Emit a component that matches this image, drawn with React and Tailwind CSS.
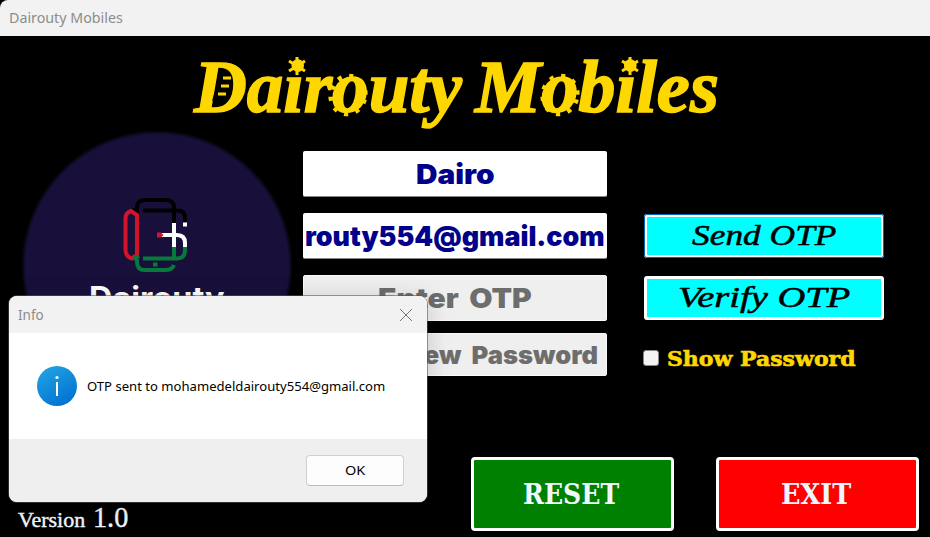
import { useLayoutEffect, useRef, useState } from "react";

// Text stretched horizontally so that it fills a given width.
function FitText({ width, className = "", children }) {
  const ref = useRef(null);
  const [scale, setScale] = useState(1);
  useLayoutEffect(() => {
    setScale(width / ref.current.offsetWidth);
  }, [width]);
  return (
    <span className="inline-block shrink-0" style={{ width }}>
      <span
        ref={ref}
        className={`inline-block origin-left whitespace-nowrap ${className}`}
        style={{ transform: `scaleX(${scale})` }}
      >
        {children}
      </span>
    </span>
  );
}

function PhoneLogo() {
  return (
    <svg width="270" height="270" viewBox="22 131 270 270" fill="none" strokeWidth="4">
      <defs>
        <radialGradient id="disc">
          <stop offset="0.965" stopColor="#18103a" />
          <stop offset="1" stopColor="#000000" />
        </radialGradient>
      </defs>
      <circle cx="157" cy="266" r="136" fill="url(#disc)" />
      <path d="M137 214V208Q137 200 145 200H166Q174 200 174 208V223M143 210.5H178Q185 210.5 185 218V222M132 209L138 215" stroke="#000" />
      <path d="M137 215V255L131.5 258.5Q125.500 256 125.500 250V218Q125.500 213 131 211Z" stroke="#cf142b" />
      <path d="M174 223V247M161 235H177Q185 235 185 243V247M183 224.500H187" stroke="#fff" />
      <path d="M157 232.500H161L163.500 235L161 237.500H157Z" fill="#cf142b" />
      <path d="M174 247V257M185 247V250Q185 258.500 177 258.500H143M137 256V262Q137 270 145 270H166Q172 270 174 265M133 259L139 256M153 264.500H157.500" stroke="#07793b" />
    </svg>
  );
}

// Gear teeth and star points laid over the title lettering.
function TitleOrnaments() {
  return (
    <svg className="absolute left-0 top-0" width="930" height="95" viewBox="0 36 930 95" fill="none" stroke="#ffd700">
      <g strokeWidth="5" strokeDasharray="4 7.500">
        <ellipse cx="348" cy="95" rx="17" ry="19" transform="rotate(15 348 95)" />
        <ellipse cx="560" cy="95" rx="17" ry="19" transform="rotate(15 560 95)" />
      </g>
      <g strokeWidth="3">
        <path d="M297 57V75M289 61L305 71M305 61L289 71" />
        <path d="M630 57V75M622 61L638 71M638 61L622 71" />
      </g>
      <path d="M223 72L214 101" stroke="#000" strokeWidth="4" />
      <path d="M223 78H231M221 86H229M218 94H226" strokeWidth="3" />
    </svg>
  );
}

const field =
  "flex w-[304px] items-center justify-center overflow-hidden rounded-[2px] border-b border-[#868686] bg-white pt-0.5 font-['Inter'] text-[27.5px] font-black leading-none text-[#00008b]";
const disabled =
  "flex w-[304px] items-center overflow-hidden rounded-[2px] border border-[#fafafa] bg-[#efefef] pt-0.5 font-['Inter'] font-black leading-none text-[#6d6d6d]";
const cyan =
  "flex w-60 items-center justify-center rounded-[3px] border-[3px] bg-[#00ffff] pb-0.5 font-['Liberation_Serif'] text-[30px] italic leading-none text-black [-webkit-text-stroke:0.5px_black]";
const action =
  "flex h-[74px] w-[203px] items-center justify-center rounded-[4px] border-[3px] border-white pr-[3px] font-['DejaVu_Serif'] text-[27px] font-bold leading-none text-[#f0f8ff]";

export default function App() {
  return (
    <div className="relative flex h-[537px] w-[930px] flex-col overflow-hidden bg-black">
      <header className="flex h-9 shrink-0 items-center rounded-tl-lg bg-[#f2f2f2] pl-[9px] font-['Noto_Sans'] text-[14.5px] text-[#8c8c8c]">
        <FitText width={114}>Dairouty Mobiles</FitText>
      </header>

      <h1 className="relative flex h-[95px] shrink-0 pl-[194px] pt-[9px] font-['Liberation_Serif'] text-[75px] font-bold italic leading-[84px] text-[#ffd700]">
        <FitText width={268} className="[-webkit-text-stroke:1.5px_#ffd700]">Dairouty</FitText>
        <span className="w-[13px]" />
        <FitText width={244} className="[-webkit-text-stroke:1.5px_#ffd700]">Mobiles</FitText>
        <TitleOrnaments />
      </h1>

      <main className="flex h-[270px] shrink-0 pl-[22px]">
        <div className="relative h-[270px] w-[270px]">
          <PhoneLogo />
          <div className="absolute left-[67px] top-[144px] font-['Inter'] text-[31px] font-bold text-white">
            <FitText width={136}>Dairouty</FitText>
          </div>
        </div>

        <div className="ml-[11px] flex flex-col pt-5">
          <div className={`${field} h-[46px]`}>
            <FitText width={79}>Dairo</FitText>
          </div>
          <div className={`${field} mt-4 h-[46px]`}>
            <FitText width={300}>routy554@gmail.com</FitText>
          </div>
          <div className={`${disabled} mt-4 h-[46px] pl-[74px] text-[27.5px]`}>
            <FitText width={154} className="[word-spacing:4px]">Enter OTP</FitText>
          </div>
          <div className={`${disabled} mt-3 h-[43px] pl-[21px] text-[25px]`}>
            <FitText width={273} className="[word-spacing:5px]">Enter New Password</FitText>
          </div>
        </div>

        <div className="ml-[37px] flex flex-col pt-[83px]">
          <div className={`${cyan} h-11 border-white outline outline-1 -outline-offset-1 outline-[#0067c0]`}>
            <FitText width={145}>Send OTP</FitText>
          </div>
          <div className={`${cyan} mt-[18px] h-11 border-white`}>
            <FitText width={172}>Verify OTP</FitText>
          </div>
          <div className="mt-[25px] flex h-[26px] items-center font-['DejaVu_Serif'] text-[20px] font-bold leading-none text-[#ffd700]">
            <span className="-ml-px mr-2 h-4 w-4 rounded-[3px] border border-[#868686] bg-[#f3f3f3]" />
            <FitText width={189} className="pt-0.5 [-webkit-text-stroke:0.6px_#ffd700]">Show Password</FitText>
          </div>
        </div>
      </main>

      <footer className="flex h-[136px] shrink-0 pl-[18px] pt-14">
        <div className="w-[453px] pt-[45px] font-['Liberation_Serif'] leading-[30px] text-[#f0f8ff]">
          <span className="flex items-baseline gap-2">
            <FitText width={67} className="text-[21px] [-webkit-text-stroke:0.4px_#f0f8ff]">Version</FitText>
            <FitText width={35} className="text-[29px] [-webkit-text-stroke:0.4px_#f0f8ff]">1.0</FitText>
          </span>
        </div>
        <div className={`${action} bg-[#008000]`}>
          <FitText width={96}>RESET</FitText>
        </div>
        <div className={`${action} ml-[42px] bg-[#ff0000]`}>
          <FitText width={70}>EXIT</FitText>
        </div>
      </footer>

      <section className="absolute left-[9px] top-[296px] flex h-[206px] w-[418px] flex-col overflow-hidden rounded-lg bg-white font-['Noto_Sans'] shadow-[0_0_0_1px_#55555590,0_4px_24px_#00000030]">
        <div className="flex h-[37px] shrink-0 items-center justify-between bg-[#f2f2f2] pl-[9px] pr-[15px] text-[14.5px] text-[#8c8c8c]">
          <FitText width={26}>Info</FitText>
          <svg width="12" height="12" viewBox="0 0 12 12" stroke="#777" fill="none">
            <path d="M0 0L12 12M12 0L0 12" />
          </svg>
        </div>
        <div className="flex h-[106px] shrink-0 items-center pl-7 text-[13px] text-black">
          <svg width="40" height="40" viewBox="0 0 40 40" className="mr-2.5">
            <defs>
              <linearGradient id="info" x1="0.2" y1="0" x2="0.8" y2="1">
                <stop stopColor="#22a2e2" />
                <stop offset="1" stopColor="#0070d0" />
              </linearGradient>
            </defs>
            <circle cx="20" cy="20" r="20" fill="url(#info)" />
            <circle cx="20" cy="11.500" r="1.600" fill="#fff" />
            <path d="M20 16V30" stroke="#fff" strokeWidth="2" />
          </svg>
          <FitText width={298} className="pt-px">OTP sent to mohamedeldairouty554@gmail.com</FitText>
        </div>
        <div className="flex grow items-center justify-end bg-[#efefef] pr-[23px] text-[13px] text-black">
          <div className="flex h-[31px] w-[98px] items-center justify-center rounded-[4px] border border-[#d0d0d0] border-b-[#bcbcbc] bg-[#fdfdfd]">
            <FitText width={20}>OK</FitText>
          </div>
        </div>
      </section>
    </div>
  );
}
